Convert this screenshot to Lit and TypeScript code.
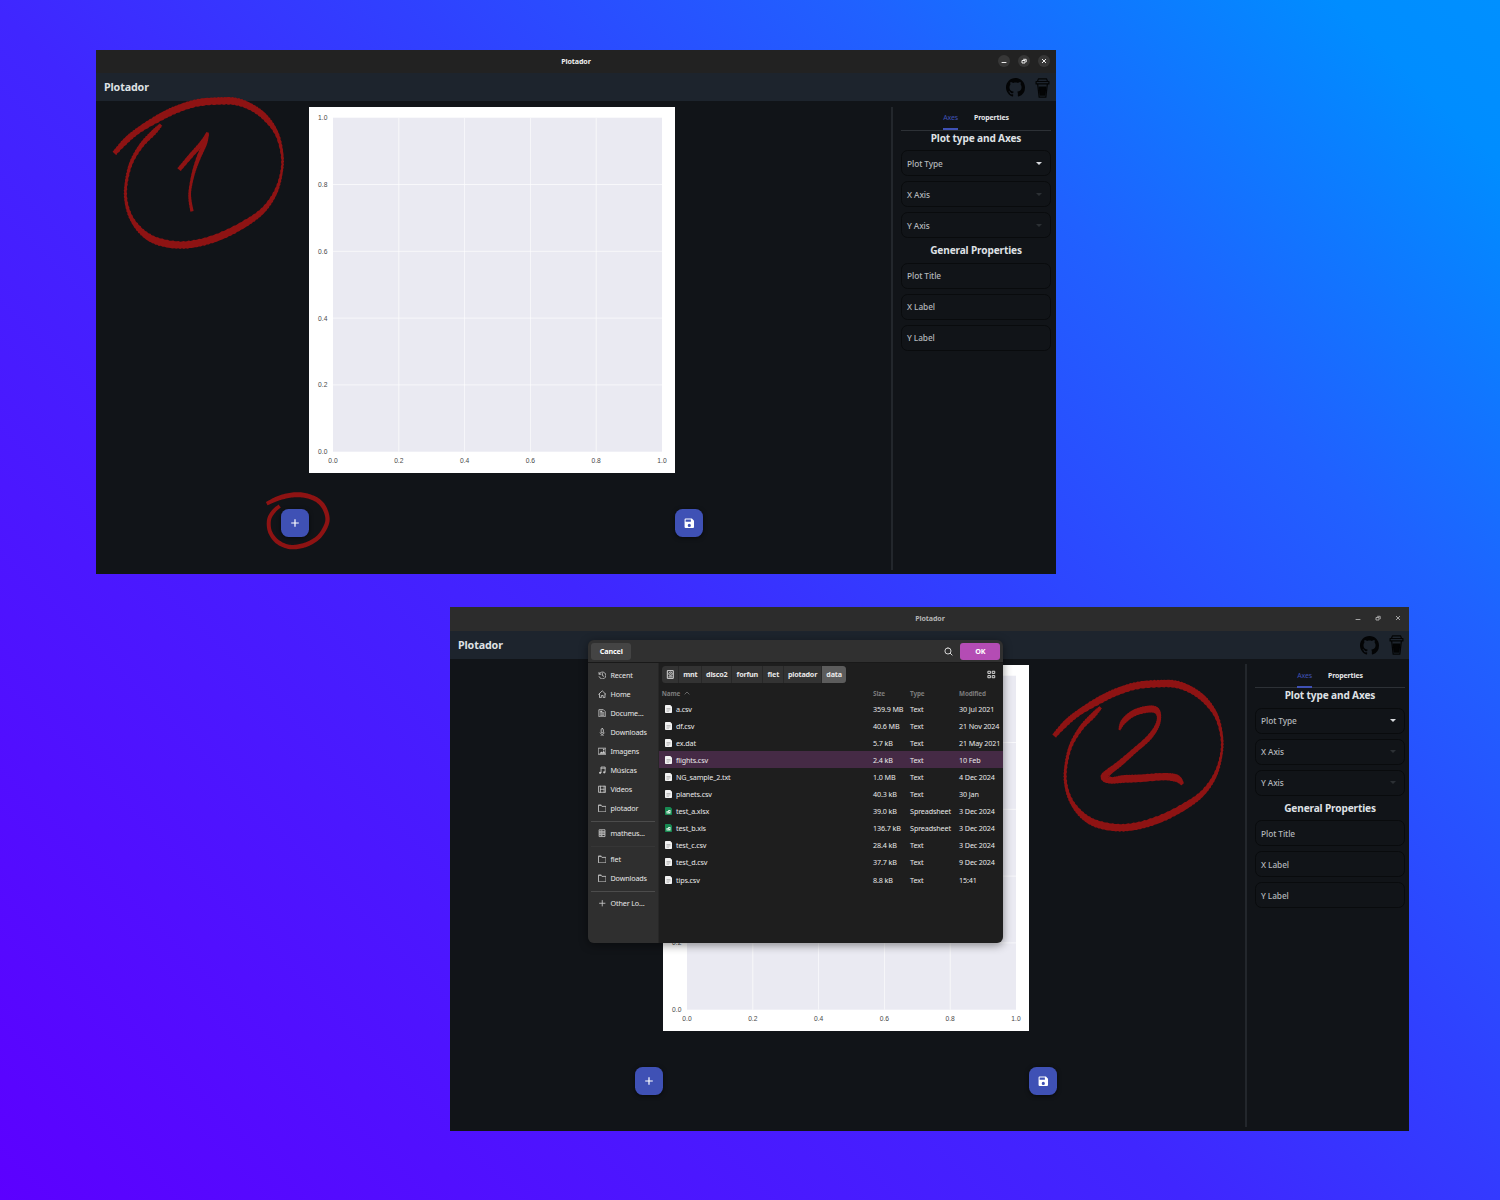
import { LitElement, html, svg, css, nothing } from "lit";
import { customElement, property } from "lit/decorators.js";
import { classMap } from "lit/directives/class-map.js";

type Pt = [number, number, number];

/** Builds a closed outline around a centre line whose points carry a width. */
function ribbon(pts: Pt[], rough = 0.35): string {
  const dense: Pt[] = [];
  const at = (i: number) => pts[Math.max(0, Math.min(pts.length - 1, i))];
  for (let i = 0; i < pts.length - 1; i++) {
    const p = [at(i - 1), at(i), at(i + 1), at(i + 2)];
    for (let s = 0; s < 12; s++) {
      const t = s / 12;
      dense.push(
        [0, 1, 2].map((k) => {
          const [a, b, c, d] = p.map((q) => q[k]);
          return 0.5 * (2 * b + (c - a) * t + (2 * a - 5 * b + 4 * c - d) * t * t + (3 * b - a - 3 * c + d) * t * t * t);
        }) as Pt,
      );
    }
  }
  dense.push(pts[pts.length - 1]);
  const left: string[] = [];
  const right: string[] = [];
  dense.forEach(([x, y, w], i) => {
    const a = dense[Math.max(0, i - 1)];
    const b = dense[Math.min(dense.length - 1, i + 1)];
    const len = Math.hypot(b[0] - a[0], b[1] - a[1]) || 1;
    const nx = -(b[1] - a[1]) / len;
    const ny = (b[0] - a[0]) / len;
    const j = (n: number) => Math.sin(i * n) * rough * 3;
    const l = w / 2 + j(2.1);
    const r = w / 2 + j(2.9);
    left.push(`${((x + nx * l) / 3).toFixed(2)} ${((y + ny * l) / 3).toFixed(2)}`);
    right.unshift(`${((x - nx * r) / 3).toFixed(2)} ${((y - ny * r) / 3).toFixed(2)}`);
  });
  return `M${left.concat(right).join("L")}Z`;
}

const RING: Pt[] = [
  [73, 340, 14], [110, 300, 18], [150, 268, 18], [210, 232, 22], [260, 208, 22], [320, 189, 22], [385, 183, 22],
  [440, 185, 22], [490, 205, 20], [530, 237, 18], [562, 285, 12], [577, 350, 8], [573, 405, 8], [555, 460, 12],
  [520, 510, 16], [470, 548, 20], [400, 585, 22], [330, 608, 22], [265, 615, 22], [200, 603, 22], [155, 575, 18],
  [122, 530, 12], [107, 475, 9], [110, 420, 9], [125, 365, 11], [155, 315, 14], [190, 278, 16], [213, 254, 10],
];
const ONE_A: Pt[] = [[267, 389, 13], [300, 350, 14], [335, 310, 14], [353, 281, 11]];
const ONE_B: Pt[] = [[353, 277, 8], [345, 308, 14], [325, 355, 13], [310, 400, 10], [300, 450, 8], [300, 480, 9], [306, 514, 10]];
const TWO: Pt[] = [
  [238, 390, 6], [250, 365, 16], [280, 340, 19], [320, 328, 21], [347, 330, 20], [357, 350, 13], [350, 380, 14],
  [325, 415, 16], [280, 455, 16], [240, 490, 18], [205, 517, 20], [195, 532, 26], [215, 541, 20], [250, 537, 23],
  [300, 535, 23], [370, 530, 22], [410, 535, 22], [428, 553, 10],
];
const LOOP: Pt[] = [
  [50, 221, 11], [90, 203, 14], [140, 194, 15], [185, 202, 14], [215, 222, 14], [231, 255, 13], [229, 285, 13],
  [205, 322, 13], [165, 345, 14], [120, 351, 13], [82, 335, 13], [60, 305, 12], [57, 270, 12], [70, 245, 12], [89, 228, 11],
];

const githubIcon = svg`<path fill="#030405" d="M8 0C3.58 0 0 3.58 0 8c0 3.54 2.29 6.53 5.47 7.59.4.07.55-.17.55-.38 0-.19-.01-.82-.01-1.49-2.01.37-2.53-.49-2.69-.94-.09-.23-.48-.94-.82-1.13-.28-.15-.68-.52-.01-.53.63-.01 1.08.58 1.23.82.72 1.21 1.87.87 2.33.66.07-.52.28-.87.51-1.07-1.78-.2-3.64-.89-3.64-3.95 0-.87.31-1.59.82-2.15-.08-.2-.36-1.02.08-2.12 0 0 .67-.21 2.2.82.64-.18 1.32-.27 2-.27s1.36.09 2 .27c1.53-1.04 2.2-.82 2.2-.82.44 1.1.16 1.92.08 2.12.51.56.82 1.27.82 2.15 0 3.07-1.87 3.75-3.65 3.95.29.25.54.73.54 1.48 0 1.07-.01 1.93-.01 2.2 0 .21.15.46.55.38A8.01 8.01 0 0 0 16 8c0-4.42-3.58-8-8-8z"/>`;

const cupIcon = svg`<g fill="none" stroke="#030405" stroke-width="1.1" stroke-linejoin="round">
  <path d="M2.2 3.2 3.1.9h7.8l.9 2.3M.9 3.3h12.2v2.3H.9zM2.4 5.8l1.4 12.4h6.4l1.4-12.4"/>
  <path fill="#030405" d="M3.9 8.6h6.2l-.8 7.6H4.7z"/></g>`;

const line = (d: string) => svg`<path fill="none" stroke="currentColor" stroke-width="1" stroke-linejoin="round" stroke-linecap="round" d="${d}"/>`;
const ICONS: Record<string, unknown> = {
  recent: line("M1.2 1.6v2.2h2.2M1.4 3.600A4.100 4.100 0 1 1 1.300 6.700M5.200 3v2.400l1.600.8"),
  home: line("M.8 5 5 1l4.2 4M1.8 4.6V9h2.1V6.5h2.2V9h2.1V4.6"),
  doc: svg`${line("M1.5.8h4.8l2.2 2.2v6.2h-7zM3 4.4h3.8M3 5.9h3.8M3 7.4h3.8")}<path fill="currentColor" d="M2.6 2h2.4v1.6H2.6z"/>`,
  download: line("M5 .7a1.300 1.300 0 0 1 1.300 1.300V5.600H3.700V2A1.300 1.300 0 0 1 5 .7zM2.600 5.800 5 8.200l2.400-2.400M3.400 9.400h3.200"),
  image: svg`${line("M.7 1.4h8.6v7.2H.7z")}<path fill="currentColor" d="m1.6 7.8 2.2-2.6 1.3 1.2 1.8-2.2 1.8 3.6z"/><circle cx="6.8" cy="3.1" r=".9" fill="currentColor"/>`,
  music: svg`${line("M3.6 7.800V1.200h4.800v6M3.600 2.600h4.800")}<circle cx="2.5" cy="8" r="1.3" fill="currentColor"/><circle cx="7.3" cy="7.4" r="1.3" fill="currentColor"/>`,
  video: line("M1 1.4h8v7.2H1zM2.8 1.4v7.2M7.2 1.4v7.2M2.8 5h4.4"),
  folder: line("M.6 8.800V1.400h3l1 1.400h4.800v6zM.8 1.400h2.800"),
  server: line("M1.800.9h6.400v2.600H1.800zM1.800 3.500h6.400v2.600H1.800zM1.800 6.100h6.400v2.800H1.800zM3.400 2.200h1.400M3.400 4.800h1.400M3.400 7.500h1.400"),
  plus: line("M5 1.8v6.4M1.8 5h6.4"),
  disk: svg`${line("M1.9.7h6.2v8.6H1.9zM3.2 7.6h3.6")}<circle cx="5" cy="4.2" r="1.9" fill="none" stroke="currentColor" stroke-width=".9"/><circle cx="5" cy="4.2" r=".6" fill="currentColor"/>`,
  search: line("M4.4 1a3.4 3.4 0 1 1 0 6.8 3.4 3.4 0 0 1 0-6.8M7 7l2 2"),
  grid: line("M1.4 1.4h2.4v2.4H1.4zM6.2 1.4h2.4v2.4H6.2zM1.4 6.2h2.4v2.4H1.4zM6.2 6.2h2.4v2.4H6.2z"),
};
const icon = (name: string, size = 9) =>
  html`<svg class="icon" width=${size} height=${size} viewBox="0 0 10 10">${ICONS[name]}</svg>`;

@customElement("plot-canvas")
export class PlotCanvas extends LitElement {
  /** Number of y tick labels to draw, counted from the bottom. */
  @property({ type: Number }) yTicks = 6;

  static styles = css`
    :host { display: block; width: 366px; height: 366px; background: #fff; }
    svg { display: block; }
    text { font: 6.7px "Liberation Sans", Arial, sans-serif; fill: #484848; }
  `;
  render() {
    const n = [0, 1, 2, 3, 4, 5];
    const x = (i: number) => 24 + i * 65.8;
    const y = (i: number) => 344.7 - i * 66.8;
    return html`<svg width="366" height="366" viewBox="0 0 366 366">
      <rect x="24" y="10.7" width="329" height="334" fill="#eaeaf2" />
      ${n.slice(1, 5).map((i) => svg`<path stroke="#fff" stroke-width=".8" opacity=".85" d="M${x(i)} 10.700V344.700M24 ${y(i)}H353"/>`)}
      ${n.map((i) => svg`<text x=${x(i)} y="356.1" text-anchor="middle">${(i / 5).toFixed(1)}</text>`)}
      ${n.slice(0, this.yTicks).map((i) => svg`<text x="18.4" y=${y(i) + 2.5} text-anchor="end">${(i / 5).toFixed(1)}</text>`)}
    </svg>`;
  }
}

@customElement("plot-window")
export class PlotWindow extends LitElement {
  @property({ type: Boolean }) inactive = false;

  static styles = css`
    :host { display: flex; flex-direction: column; width: 960px; height: 524px; background: #111418; color: #dfe1e5; font-family: "Noto Sans", "Open Sans", sans-serif; overflow: hidden; }
    .titlebar { flex: none; height: 23px; display: grid; grid-template-columns: 1fr auto 1fr; align-items: center; background: #222; font-weight: 700; font-size: 7.1px; letter-spacing: -0.1px; color: #f0f0f0; }
    .titlebar.dim { height: 23.5px; background: #2c2c2c; color: #b4b4b4; }
    .name { grid-column: 2; padding-bottom: 1px; }
    .controls { justify-self: end; display: flex; gap: 8px; padding: 0 5.6px 0.6px 0; }
    .ctl { width: 12px; height: 12px; border-radius: 6px; background: #373737; display: block; color: #eee; }
    .dim .ctl { background: none; color: #a4a4a4; }
    .appbar { flex: none; height: 28px; box-sizing: border-box; padding: 0 6px 0 8px; display: flex; align-items: center; background: #1d242d; font-weight: 700; font-size: 10.7px; letter-spacing: -0.12px; }
    .brand { flex: 1; padding-top: 0.5px; }
    .links { display: flex; gap: 10px; align-items: center; padding-top: 1px; }
    .body { flex: 1; display: flex; min-height: 0; }
    .main { width: 795px; box-sizing: border-box; padding: 5.5px 3px 0 0; display: flex; flex-direction: column; align-items: center; gap: 36.7px; }
    .dim ~ .body .main { padding-top: 6px; }
    .actions { width: 422px; display: flex; justify-content: space-between; }
    .fab { width: 28px; height: 28px; border-radius: 7.5px; background: #3f51b5; display: grid; place-items: center; box-shadow: 0 1px 4px rgba(0, 0, 0, 0.6); }
    .divider { width: 2px; margin: 5.5px 0 4.5px; background: #23272c; }
    .side { flex: 1; padding: 5.3px 5px 0 8px; }
    .tabs { height: 23.5px; border-bottom: 1px solid #2d3136; display: flex; justify-content: center; gap: 16px; font-size: 7px; font-weight: 700; line-height: 23px; letter-spacing: -0.14px; color: #e6e7ea; }
    .tab.on { color: #3f51b5; font-weight: 400; border-bottom: 2px solid #3f51b5; box-sizing: border-box; height: 24px; }
    .heading { margin: 0; height: 16px; line-height: 15px; text-align: center; font-size: 10.1px; font-weight: 700; letter-spacing: -0.14px; white-space: nowrap; }
    .heading + .field { margin-top: 3.5px; }
    .field { height: 26px; box-sizing: border-box; border: 1px solid #090b0d; border-radius: 6.5px; margin-bottom: 5px; padding: 0 8px 0 5px; display: flex; align-items: center; justify-content: space-between; font-size: 8.3px; font-weight: 500; letter-spacing: -0.08px; color: #b4b7bb; }
    .caret { width: 0; height: 0; border: 3px solid transparent; border-top-color: #d8dade; border-bottom: 0; }
    .caret.off { border-top-color: #2c3034; }
  `;

  private field(label: string, caret = "") {
    return html`<div class="field"><span>${label}</span>${caret ? html`<i class=${classMap({ caret: true, off: caret === "off" })}></i>` : nothing}</div>`;
  }

  render() {
    const ctl = (d: string) => html`<svg class="ctl" viewBox="0 0 12 12"><path d=${d} fill="none" stroke="currentColor" stroke-width="1"/></svg>`;
    return html`
      <div class=${classMap({ titlebar: true, dim: this.inactive })}>
        <span class="name">Plotador</span>
        <div class="controls">${ctl("M3.6 7.500h4.800")}${ctl("M4 5.500h3v2.500H4zM5.200 4.300h3v2.800")}${ctl("M4 4l4 4M8 4l-4 4")}</div>
      </div>
      <div class="appbar">
        <span class="brand">Plotador</span>
        <div class="links">
          <svg width="19" height="19" viewBox="0 0 16 16">${githubIcon}</svg>
          <svg width="15" height="20" viewBox="0 0 14 19">${cupIcon}</svg>
        </div>
      </div>
      <div class="body">
        <div class="main">
          <plot-canvas .yTicks=${this.inactive ? 2 : 6}></plot-canvas>
          <div class="actions">
            <div class="fab"><svg width="14" height="14" viewBox="0 0 14 14"><path d="M7 3.2v7.6M3.2 7h7.6" stroke="#fff" stroke-width="1.2"/></svg></div>
            <div class="fab"><svg width="12.6" height="12.6" viewBox="0 0 24 24"><path fill="#fff" d="M17 3H5a2 2 0 0 0-2 2v14a2 2 0 0 0 2 2h14a2 2 0 0 0 2-2V7l-4-4zm-5 16a3 3 0 1 1 0-6 3 3 0 0 1 0 6zm3-10H5V5h10v4z"/></svg></div>
          </div>
        </div>
        <div class="divider"></div>
        <div class="side">
          <div class="tabs"><span class="tab on">Axes</span><span class="tab">Properties</span></div>
          <h3 class="heading">Plot type and Axes</h3>
          ${this.field("Plot Type", "on")}${this.field("X Axis", "off")}${this.field("Y Axis", "off")}
          <h3 class="heading">General Properties</h3>
          ${this.field("Plot Title")}${this.field("X Label")}${this.field("Y Label")}
        </div>
      </div>`;
  }
}

const FILES: [string, string, string, string][] = [
  ["a.csv", "359.9 MB", "Text", "30 Jul 2021"],
  ["df.csv", "40.6 MB", "Text", "21 Nov 2024"],
  ["ex.dat", "5.7 kB", "Text", "21 May 2021"],
  ["flights.csv", "2.4 kB", "Text", "10 Feb"],
  ["NG_sample_2.txt", "1.0 MB", "Text", "4 Dec 2024"],
  ["planets.csv", "40.3 kB", "Text", "30 Jan"],
  ["test_a.xlsx", "39.0 kB", "Spreadsheet", "3 Dec 2024"],
  ["test_b.xls", "136.7 kB", "Spreadsheet", "3 Dec 2024"],
  ["test_c.csv", "28.4 kB", "Text", "3 Dec 2024"],
  ["test_d.csv", "37.7 kB", "Text", "9 Dec 2024"],
  ["tips.csv", "8.8 kB", "Text", "15:41"],
];
const PLACES: [string, string][] = [
  ["recent", "Recent"], ["home", "Home"], ["doc", "Docume…"], ["download", "Downloads"], ["image", "Imagens"],
  ["music", "Músicas"], ["video", "Vídeos"], ["folder", "plotador"], ["-", ""], ["server", "matheus…"], ["~", ""],
  ["folder", "flet"], ["folder", "Downloads"], ["-", ""], ["plus", "Other Lo…"],
];

@customElement("file-dialog")
export class FileDialog extends LitElement {
  static styles = css`
    :host { display: flex; flex-direction: column; width: 414.5px; height: 302.7px; box-sizing: border-box; border-radius: 6px; overflow: hidden; background: #1e1e1e; color: #e8e8e8; font: 7.2px "Noto Sans", "Open Sans", sans-serif; letter-spacing: -0.14px; box-shadow: 0 2px 10px rgba(0, 0, 0, 0.45); }
    .icon { display: block; flex: none; }
    .head { flex: none; height: 22.7px; box-sizing: border-box; border-bottom: 1px solid #191919; background: #303030; display: flex; align-items: center; padding: 0 2.5px 0 3px; font-weight: 700; }
    .btn { height: 17px; line-height: 17px; border-radius: 3px; text-align: center; color: #fff; }
    .cancel { width: 40px; background: #444; margin-right: auto; }
    .ok { width: 40px; background: #b44cb4; margin-left: 7px; }
    .cols { flex: 1; display: flex; min-height: 0; }
    .places { flex: none; width: 70.500px; box-sizing: border-box; background: #2f2f2f; padding: 2.6px 2.500px 0 3px; border-right: 1px solid #272727; }
    .place { height: 19px; display: flex; align-items: center; gap: 4px; padding-left: 6.7px; white-space: nowrap; }
    .place .icon { color: #c8c8c8; }
    .sep { height: 1px; background: #4c4c4c; margin: 3.2px 0 2.2px; }
    .sep.soft { background: #363636; margin: 3px 0 2.4px; }
    .files { flex: 1; min-width: 0; }
    .top { height: 23px; display: flex; align-items: center; justify-content: space-between; padding: 0 7px 0 3.5px; }
    .path { display: flex; height: 17px; line-height: 17px; border-radius: 3.5px; overflow: hidden; background: #333; font-weight: 700; letter-spacing: -0.2px; }
    .crumb { box-sizing: border-box; text-align: center; border-right: 1px solid #282828; display: grid; place-items: center; white-space: nowrap; }
    .crumb.on { background: #5c5c5c; border: 0; }
    .row { display: grid; grid-template-columns: 214.300px 37px 49px 1fr; height: 17px; align-items: center; white-space: nowrap; }
    .row.labels { height: 14.3px; color: #7c7c7c; font-weight: 700; font-size: 6.3px; }
    .row.labels .first { padding-left: 3px; gap: 4px; }
    .row.picked { background: #452a45; }
    .row:last-child { margin-top: 1px; }
    .first { display: flex; align-items: center; gap: 3.6px; padding-left: 6.6px; }
  `;

  private fileIcon(sheet: boolean) {
    return html`<svg class="icon" width="7" height="8" viewBox="0 0 7 8">
      <path fill=${sheet ? "#188a52" : "#f2f2f2"} d="M.8 0h4.500L7 1.700v5.500a.8.8 0 0 1-.8.8H.8A.8.8 0 0 1 0 7.200V.8A.8.8 0 0 1 .8 0z"/>
      ${sheet
        ? svg`<path fill="#dff3e8" d="M1.500 4h1.700v-.900h2.300v3.500H1.500z"/><path fill="#188a52" d="M2.300 4.800h1v.8h-1zM4 4.200h.8V5H4z"/>`
        : svg`<path stroke="#999" stroke-width=".6" d="M1.500 3.500h4M1.500 4.900h4M1.500 6.200h2.600"/>`}
    </svg>`;
  }

  render() {
    const crumbs: [string, number][] = [["mnt", 23], ["disco2", 30], ["forfun", 31], ["flet", 21], ["plotador", 37.5], ["data", 24.5]];
    return html`
      <div class="head">
        <div class="btn cancel">Cancel</div>${icon("search", 9)}<div class="btn ok">OK</div>
      </div>
      <div class="cols">
        <div class="places">
          ${PLACES.map(([i, t]) =>
            t ? html`<div class="place">${icon(i, 8.5)}<span>${t}</span></div>` : html`<div class=${classMap({ sep: true, soft: i === "~" })}></div>`)}
        </div>
        <div class="files">
          <div class="top">
            <div class="path">
              <span class="crumb" style="width:17px">${icon("disk", 9)}</span>
              ${crumbs.map(([t, w]) => html`<span class=${classMap({ crumb: true, on: t === "data" })} style="width:${w}px">${t}</span>`)}
            </div>
            ${icon("grid", 9)}
          </div>
          <div class="row labels">
            <span class="first">Name <svg width="6" height="4" viewBox="0 0 6 4"><path d="M.6 3.400 3 1l2.400 2.400" fill="none" stroke="#777" stroke-width=".8"/></svg></span>
            <span>Size</span><span>Type</span><span>Modified</span>
          </div>
          ${FILES.map(([n, s, t, m]) => html`<div class=${classMap({ row: true, picked: n === "flights.csv" })}>
            <span class="first">${this.fileIcon(t === "Spreadsheet")}<span>${n}</span></span><span>${s}</span><span>${t}</span><span>${m}</span>
          </div>`)}
        </div>
      </div>`;
  }
}

@customElement("app-root")
export class AppRoot extends LitElement {
  static styles = css`
    :host { display: block; position: relative; width: 1500px; height: 1200px; overflow: hidden; background: linear-gradient(45deg, #5c00ff 0%, #4026ff 44%, #2f42ff 60%, #2061ff 76%, #008dff 94%, #0090ff 100%); }
    .win { position: absolute; }
    .w1 { left: 96px; top: 50px; }
    .w2 { left: 450px; top: 607px; clip-path: inset(0 1px 0 0); }
    .dialog { position: absolute; left: 588.3px; top: 640.3px; }
    .ink { position: absolute; inset: 0; fill: #8e1313; pointer-events: none; }
  `;
  render() {
    return html`
      <plot-window class="win w1"></plot-window>
      <plot-window class="win w2" inactive></plot-window>
      <file-dialog class="dialog"></file-dialog>
      <svg class="ink" width="1500" height="1200" viewBox="0 0 1500 1200">
        <g transform="translate(90 40)"><path d=${ribbon(RING)} /><path d=${ribbon(ONE_A, 0.2)} /><path d=${ribbon(ONE_B, 0.15)} /></g>
        <g transform="translate(1029.700 622.700)"><path d=${ribbon(RING)} /></g>
        <g transform="translate(1040 600)"><path d=${ribbon(TWO, 0.2)} /></g>
        <g transform="translate(250 430)"><path d=${ribbon(LOOP, 0)} /></g>
      </svg>`;
  }
}
